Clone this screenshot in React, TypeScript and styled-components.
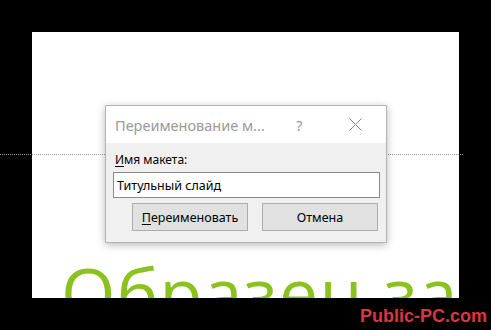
import React, { FC } from 'react';
import styled, { createGlobalStyle } from 'styled-components';

const GlobalStyle = createGlobalStyle`
  html, body {
    margin: 0;
    padding: 0;
    background: #000;
  }
`;

const Page = styled.div`
  position: relative;
  width: 491px;
  height: 330px;
  background: #000;
  overflow: hidden;
  display: flex;
  flex-direction: column;
  padding-top: 32px;
  box-sizing: border-box;
`;

const SlideRow = styled.div`
  display: flex;
  padding-left: 32px;
`;

const Slide = styled.div`
  width: 427px;
  height: 266px;
  background: #fff;
  overflow: hidden;
  display: flex;
  flex-direction: column;
  justify-content: flex-end;
`;

const SlideTitle = styled.div`
  font-family: "Open Sans", "Noto Sans", sans-serif;
  font-size: 70px;
  line-height: 60px;
  height: 36px;
  overflow: hidden;
  color: #8cc21f;
  white-space: nowrap;
  padding-left: 29px;
  letter-spacing: 1.2px;
`;

const Footer = styled.div`
  flex: 1;
  display: flex;
  justify-content: flex-end;
  align-items: center;
  padding-right: 4px;
`;

const Watermark = styled.span`
  font-family: "Liberation Sans", Arial, sans-serif;
  font-weight: bold;
  font-size: 18px;
  color: #dc3540;
  margin-top: 4px;
`;

// placeholder border of the slide, runs off the slide edge
const PlaceholderLine = styled.div`
  position: absolute;
  left: 0;
  top: 154px;
  width: 463px;
  border-top: 1px dotted #9a9a9a;
`;

const Dialog = styled.div`
  position: absolute;
  left: 105px;
  top: 105px;
  width: 282px;
  height: 138px;
  box-sizing: border-box;
  border: 1px solid #b4b4b4;
  background: #f0f0f0;
  box-shadow: 0 2px 8px rgba(0, 0, 0, 0.28);
  display: flex;
  flex-direction: column;
  font-family: "Noto Sans", "Open Sans", sans-serif;
`;

const TitleBar = styled.div`
  height: 37px;
  background: #fff;
  display: flex;
  align-items: center;
  padding-left: 9px;
`;

const TitleText = styled.span`
  font-size: 14.5px;
  color: #9a9a9a;
  width: 181px;
  white-space: nowrap;
`;

const HelpMark = styled.span`
  font-size: 15px;
  color: #9a9a9a;
  width: 53px;
`;

const CloseIcon = styled.svg`
  width: 13px;
  height: 13px;
`;

const Body = styled.div`
  flex: 1;
  display: flex;
  flex-direction: column;
  padding: 8px 6px 0 7px;
`;

const Label = styled.div`
  font-size: 12px;
  color: #000;
  padding-left: 2px;
  height: 21px;
  line-height: 17px;
  u {
    text-decoration-thickness: 1px;
    text-underline-offset: 2px;
  }
`;

const TextInput = styled.div`
  height: 26px;
  box-sizing: border-box;
  border: 1px solid #8a8a8a;
  background: #fff;
  font-size: 12.5px;
  color: #000;
  display: flex;
  align-items: center;
  padding-left: 3px;
`;

const ButtonRow = styled.div`
  display: flex;
  gap: 14px;
  padding: 5px 2px 0 19px;
`;

const Button = styled.div`
  width: 116px;
  height: 28px;
  box-sizing: border-box;
  border: 1px solid #adadad;
  background: #e1e1e1;
  font-size: 12.5px;
  color: #000;
  display: flex;
  align-items: center;
  justify-content: center;
  u {
    text-underline-offset: 2px;
  }
`;

const App: FC = () => {
  return (
    <>
      <GlobalStyle />
      <Page>
        <SlideRow>
          <Slide>
            <SlideTitle>Образец за</SlideTitle>
          </Slide>
        </SlideRow>
        <Footer>
          <Watermark>Public-PC.com</Watermark>
        </Footer>
        <PlaceholderLine />
        <Dialog>
          <TitleBar>
            <TitleText>Переименование м...</TitleText>
            <HelpMark>?</HelpMark>
            <CloseIcon viewBox="0 0 13 13">
              <path d="M0.5 0.5 L12.5 12.5 M12.5 0.5 L0.5 12.5" stroke="#8a8a8a" strokeWidth="1" fill="none" />
            </CloseIcon>
          </TitleBar>
          <Body>
            <Label><u>И</u>мя макета:</Label>
            <TextInput>Титульный слайд</TextInput>
            <ButtonRow>
              <Button><u>П</u>ереименовать</Button>
              <Button>Отмена</Button>
            </ButtonRow>
          </Body>
        </Dialog>
      </Page>
    </>
  );
};

export default App;
